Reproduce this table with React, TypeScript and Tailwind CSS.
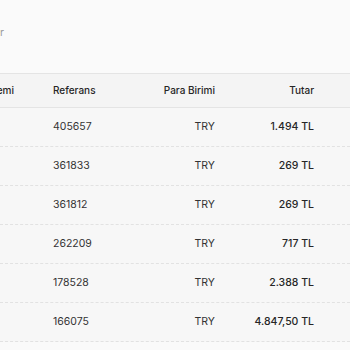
import React from "react";

const rows = [
  { ref: "405657", cur: "TRY", amt: "1.494 TL" },
  { ref: "361833", cur: "TRY", amt: "269 TL" },
  { ref: "361812", cur: "TRY", amt: "269 TL" },
  { ref: "262209", cur: "TRY", amt: "717 TL" },
  { ref: "178528", cur: "TRY", amt: "2.388 TL" },
  { ref: "166075", cur: "TRY", amt: "4.847,50 TL" },
];

export default function App() {
  return (
    <div
      className="w-[350px] h-[350px] overflow-hidden bg-[#fafafa] text-[10.5px]"
      style={{ fontFamily: "Inter, 'Noto Sans', sans-serif" }}
    >
      <div className="h-[73px] pt-[25px]">
        <div className="flex w-[4px] justify-end whitespace-nowrap text-[#9a9a9a]">
          Son işlemler
        </div>
      </div>
      <div className="flex h-[35px] items-center border-y border-[#e4e4e4] bg-[#f4f4f4] text-[10px] font-medium text-[#262626]">
        <div className="flex w-[14px] justify-end whitespace-nowrap">Ödeme Yöntemi</div>
        <div className="w-[39px]" />
        <div className="w-[80px]">Referans</div>
        <div className="w-[82px] text-right">Para Birimi</div>
        <div className="w-[99px] text-right">Tutar</div>
      </div>
      {rows.map((r) => (
        <div
          key={r.ref}
          className="flex h-[39px] items-center border-b border-dashed border-[#e2e2e2] bg-[#f7f7f7] text-[#333333]"
        >
          <div className="w-[53px]" />
          <div className="w-[80px]">{r.ref}</div>
          <div className="w-[82px] text-right">{r.cur}</div>
          <div className="w-[99px] text-right font-medium text-[#262626]">{r.amt}</div>
        </div>
      ))}
    </div>
  );
}
